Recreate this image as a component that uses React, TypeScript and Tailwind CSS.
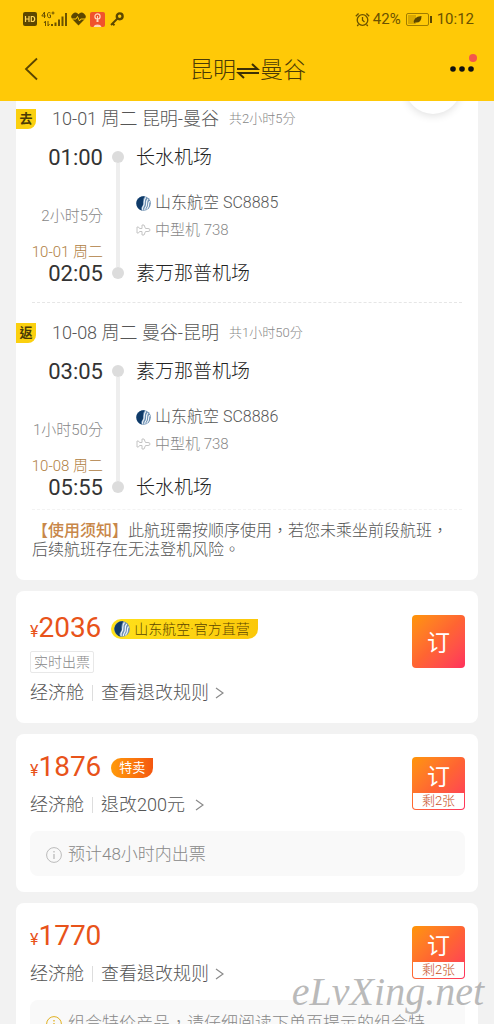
import type { ReactNode } from 'react';

interface Segment {
  mark: string;
  date: string;
  route: string;
  total: string;
  duration: string;
  depart: string;
  departAirport: string;
  arriveDate: string;
  arrive: string;
  arriveAirport: string;
  flight: string;
  plane: string;
}

interface Fare {
  price: number;
  badge?: 'official' | 'sale';
  tag?: string;
  rule: string;
  left?: number;
  note?: string;
  noteTone?: 'gray' | 'gold';
}

const segments: Segment[] = [
  {
    mark: '去',
    date: '10-01 周二',
    route: '昆明-曼谷',
    total: '共2小时5分',
    duration: '2小时5分',
    depart: '01:00',
    departAirport: '长水机场',
    arriveDate: '10-01 周二',
    arrive: '02:05',
    arriveAirport: '素万那普机场',
    flight: '山东航空 SC8885',
    plane: '中型机 738',
  },
  {
    mark: '返',
    date: '10-08 周二',
    route: '曼谷-昆明',
    total: '共1小时50分',
    duration: '1小时50分',
    depart: '03:05',
    departAirport: '素万那普机场',
    arriveDate: '10-08 周二',
    arrive: '05:55',
    arriveAirport: '长水机场',
    flight: '山东航空 SC8886',
    plane: '中型机 738',
  },
];

const fares: Fare[] = [
  { price: 2036, badge: 'official', tag: '实时出票', rule: '查看退改规则' },
  { price: 1876, badge: 'sale', rule: '退改200元\u00a0', left: 2, note: '预计48小时内出票', noteTone: 'gray' },
  {
    price: 1770,
    rule: '查看退改规则',
    left: 2,
    note: '组合特价产品，请仔细阅读下单页提示的组合特',
    noteTone: 'gold',
  },
];

function AirlineLogo({ className }: { className: string }) {
  return (
    <svg viewBox="0 0 16 16" className={className} aria-hidden="true">
      <circle cx="8" cy="8" r="7.800" fill="#6d90b3" />
      <path d="M9.500.3A7.800 7.800 0 1 0 7 15.700C4.800 14 5.200 12.400 6.600 10.800 8.200 9 7.200 7.400 7.500 5.200 7.700 3.200 8.400 1.600 9.500.3z" fill="#0f3a68" />
      <path
        d="M10.500 1.500C7.500 4.500 9.500 7.500 8.400 9.800 7.400 11.800 6.200 12.400 7.200 15M12.800 3C10.200 5.500 12 8.500 10.900 10.800 10.200 12.400 9.200 13 9.400 15M14.600 5.500C12.600 7.500 14 9.500 13 11.500 12.400 12.700 11.600 13 11.600 14.400"
        fill="none"
        stroke="#f2f6fa"
        strokeWidth="1.200"
      />
    </svg>
  );
}

function PlaneIcon() {
  return (
    <svg viewBox="0 0 15 14" className="h-[14px] w-[15px]" fill="none" stroke="#c4c4c4" strokeWidth="1" aria-hidden="true">
      <path d="M1 4h1.500l1 1.500H6V2h2l1.500 3.500H12q2 0 2 1.500t-2 1.500H9.500L8 12H6V8.500H3.500L2.500 10H1z" />
    </svg>
  );
}

function Chevron() {
  return (
    <svg viewBox="0 0 9 12" className="h-3 w-[9px]" fill="none" stroke="#8a8a8a" strokeWidth="1.200" aria-hidden="true">
      <path d="M1 1l7 5-7 5" />
    </svg>
  );
}

function StatusBar() {
  return (
    <div className="flex h-[38px] items-center justify-between pr-5 pl-[23px] text-[15px] font-normal text-[#6b5200]">
      <div className="flex items-center">
        <svg viewBox="0 0 14 14" className="size-[14px]" aria-hidden="true">
          <rect width="14" height="14" rx="2" fill="#5c4700" />
          <path d="M2.500 4v6M6 4v6M2.500 7H6M8.300 4.500v5h1.200q2.200 0 2.200-2.500T9.500 4.500z" fill="none" stroke="#ffd65a" strokeWidth="1.200" />
        </svg>
        <svg viewBox="0 0 27 16" className="ml-1 h-4 w-[27px]" aria-hidden="true">
          <g fill="none" stroke="#6b5200" strokeWidth="1">
            <path d="M3.500 7V1L.8 5h4M9.500 2Q6.500.5 6.500 4t3 2.500V4H8.300M10.500 2h3M12 .5v3" />
            <path d="M4.500 15v-5L3 12M7 10v5l1.500-2" />
          </g>
          <path d="M10 13h2v2h-2zM13.500 11.500h2V15h-2zM17 8.500h2V15h-2zM20.500 5.500h2V15h-2zM24 2h2v13h-2z" fill="#6b5200" />
        </svg>
        <svg viewBox="0 0 15 14" className="ml-[3px] h-[14px] w-[15px]" aria-hidden="true">
          <path d="M7.500 13.500L1.300 7.300A3.800 3.800 0 0 1 7.500 2.200a3.800 3.800 0 0 1 6.200 5.100z" fill="#5c4700" />
          <path d="M1 7h4l1.500-2.500L8.500 9l1.200-2H14" fill="none" stroke="#ffc907" strokeWidth="1" />
        </svg>
        <svg viewBox="0 0 15 15" className="ml-1 size-[15px]" aria-hidden="true">
          <rect width="15" height="15" rx="2" fill="#f0532c" />
          <circle cx="7.500" cy="4.500" r="2.600" fill="none" stroke="#ffd9bd" strokeWidth="1.200" />
          <path d="M7.500 4v6M6 9h3M4 15q0-2 3.500-2t3.500 2z" fill="#ffd9bd" stroke="#ffd9bd" />
        </svg>
        <svg viewBox="0 0 14 14" className="ml-[5px] size-[14px]" fill="none" stroke="#5c4700" aria-hidden="true">
          <circle cx="9.700" cy="4.300" r="2.900" strokeWidth="2.400" />
          <path d="M7.500 6.500L1 13M2.500 11.500l2 1.800" strokeWidth="1.900" />
        </svg>
      </div>
      <div className="flex items-center">
        <svg viewBox="0 0 15 15" className="mr-[3px] size-[15px]" fill="none" stroke="#6b5200" strokeWidth="1.300" aria-hidden="true">
          <circle cx="7.500" cy="8" r="5.300" />
          <path d="M7.500 5v3.300l2 1.700M.8 4.300L3.600 1.500M14.200 4.300l-2.800-2.800M3.500 12.500l-1.300 1.500M11.500 12.500l1.300 1.500" />
        </svg>
        <span>42%</span>
        <svg viewBox="0 0 26 13" className="mx-[5px] h-[13px] w-[26px]" aria-hidden="true">
          <rect x=".5" y=".5" width="22" height="12" rx="1.500" fill="none" stroke="#a07c00" />
          <rect x="2" y="2" width="8" height="9" fill="#d9a800" />
          <path d="M8 10.500Q6.500 4 15.500 3q0 7.500-6.500 6.500z" fill="#5c4700" />
          <rect x="24" y="3" width="2" height="7" fill="#5c4700" />
        </svg>
        <span>10:12</span>
      </div>
    </div>
  );
}

function Header() {
  return (
    <header className="relative z-10 h-[101px] shrink-0 bg-[#ffc907]">
      <StatusBar />
      <div className="flex h-[62px] items-center justify-between pr-[17px] pl-[23px]">
        <button type="button" aria-label="返回" className="w-10">
          <svg viewBox="0 0 16 24" className="h-6 w-4" fill="none" stroke="#5a4500" strokeWidth="1.800">
            <path d="M14 1.500L3 12l11 10.500" />
          </svg>
        </button>
        <h1 className="flex items-center pt-1 text-[23px] leading-8 text-[#4a3a06]">
          昆明
          <svg viewBox="0 0 24 16" className="h-4 w-6" fill="none" stroke="#3d3005" strokeWidth="2" aria-hidden="true">
            <path d="M1 6h20.500L16 1M23 10H2.500L8 15" />
          </svg>
          曼谷
        </h1>
        <button type="button" aria-label="更多" className="flex w-11 justify-end">
          <svg viewBox="0 0 28 30" className="h-[30px] w-7">
            <circle cx="4" cy="15" r="2.800" fill="#111" />
            <circle cx="13" cy="15" r="2.800" fill="#111" />
            <circle cx="22" cy="15" r="2.800" fill="#111" />
            <circle cx="24" cy="4" r="4" fill="#f4564a" />
          </svg>
        </button>
      </div>
    </header>
  );
}

function FlightSegment({ segment }: { segment: Segment }) {
  return (
    <section>
      <div className="flex h-[34px] items-center">
        <span className="flex h-5 w-5 items-center justify-center rounded-br-lg bg-[#fbd00f] text-[13px] font-bold text-[#4a3a06]">
          {segment.mark}
        </span>
        <h2 className="ml-4 text-lg text-[#555]">
          {segment.date} {segment.route}
        </h2>
        <span className="ml-[10px] text-[13px] text-[#888]">{segment.total}</span>
      </div>
      <div className="mt-[9px] flex">
        <div className="flex w-[87px] flex-col text-right text-[15px] leading-[18px]">
          <span className="text-[22px] leading-[26px] font-normal text-[#333]">{segment.depart}</span>
          <span className="mt-9 text-[#888]">{segment.duration}</span>
          <span className="mt-[18px] text-[#b0803f]">{segment.arriveDate}</span>
          <span className="text-[22px] leading-[26px] font-normal text-[#333]">{segment.arrive}</span>
        </div>
        <div className="mx-[9px] flex flex-col items-center pt-[6px] pb-2">
          <i className="size-3 rounded-full bg-[#dcdcdc]" />
          <i className="w-1 flex-1 bg-[#eee]" />
          <i className="size-3 rounded-full bg-[#dcdcdc]" />
        </div>
        <div className="ml-[3px] flex flex-col">
          <span className="text-[19px] leading-[26px] text-[#222]">{segment.departAirport}</span>
          <span className="mt-5 flex items-center gap-1 text-base leading-6 text-[#555]">
            <AirlineLogo className="size-[15px]" />
            {segment.flight}
          </span>
          <span className="mt-[3px] flex items-center gap-1 text-[15px] leading-6 text-[#888]">
            <PlaneIcon />
            {segment.plane}
          </span>
          <span className="mt-[19px] text-[19px] leading-[26px] text-[#222]">{segment.arriveAirport}</span>
        </div>
      </div>
    </section>
  );
}

function FareBadge({ kind }: { kind: 'official' | 'sale' }) {
  if (kind === 'sale') {
    return (
      <span className="ml-[10px] flex h-5 items-center rounded-l-full rounded-br-full bg-linear-to-r from-[#ff9a0a] to-[#f4560f] px-2 text-[13px] font-normal text-white">
        特卖
      </span>
    );
  }
  return (
    <span className="ml-[10px] flex h-5 items-center gap-1 rounded-l-full rounded-br-full bg-linear-to-r from-[#ffe11a] to-[#fbc80a] pr-2 pl-[3px] text-sm text-[#5c4600]">
      <AirlineLogo className="size-4" />
      山东航空·官方直营
    </span>
  );
}

function BookButton({ left }: { left?: number }) {
  return (
    <button
      type="button"
      className="flex h-[53px] w-[53px] shrink-0 flex-col overflow-hidden rounded bg-linear-to-br from-[#ff9500] via-[#ff6432] to-[#ff2f5c] p-px text-white"
    >
      <span className="flex w-full flex-1 items-center justify-center pt-1 text-[23px] leading-6 font-normal">订</span>
      {left && (
        <span className="w-full rounded-b-[3px] bg-white text-[13px] leading-4 text-[#c8501e]">剩{left}张</span>
      )}
    </button>
  );
}

function FareNote({ tone, children }: { tone?: 'gray' | 'gold'; children: ReactNode }) {
  return (
    <div className="mt-[14px] flex h-[45px] items-center gap-[6px] overflow-hidden rounded-lg bg-[#f9f9f9] px-4 pt-[2px] text-[17px] whitespace-nowrap text-[#888]">
      <svg
        viewBox="0 0 16 16"
        className={tone === 'gold' ? 'size-4 shrink-0 text-[#e0b020]' : 'size-4 shrink-0 text-[#bbb]'}
        fill="none"
        stroke="currentColor"
        aria-hidden="true"
      >
        <circle cx="8" cy="8" r="7.400" />
        <path d="M8 4v1.500M8 7v5" strokeWidth="1.300" />
      </svg>
      {children}
    </div>
  );
}

function FareCard({ fare }: { fare: Fare }) {
  return (
    <article className={fare.note ? 'rounded-lg bg-white pt-5 pr-[13px] pb-4 pl-[14px]' : 'rounded-lg bg-white pt-6 pr-[13px] pb-[18px] pl-[14px]'}>
      <div className="flex justify-between">
        <div>
          <div className="flex h-7 items-center text-[#e8531a]">
            <span className="flex items-baseline leading-7 font-normal">
              <span className="text-base">¥</span>
              <span className="text-[28px]">{fare.price}</span>
            </span>
            {fare.badge && <FareBadge kind={fare.badge} />}
          </div>
          {fare.tag && (
            <span className="mt-2 block h-[22px] w-fit rounded-xs border border-[#e8e8e8] px-[3px] text-sm leading-5 text-[#888]">
              {fare.tag}
            </span>
          )}
          <div className={fare.tag ? 'mt-2 flex items-center text-lg leading-6 text-[#555]' : 'mt-[11px] flex items-center text-lg leading-6 text-[#555]'}>
            经济舱
            <i className="mx-2 h-4 w-px bg-[#ddd]" />
            <button type="button" className="flex items-center gap-[6px]">
              {fare.rule}
              <Chevron />
            </button>
          </div>
        </div>
        <div className={fare.note ? 'pt-[3px]' : ''}>
          <BookButton left={fare.left} />
        </div>
      </div>
      {fare.note && <FareNote tone={fare.noteTone}>{fare.note}</FareNote>}
    </article>
  );
}

export default function App() {
  return (
    <div className="relative flex h-screen flex-col overflow-hidden bg-[#f2f2f2] font-[Roboto,'Noto_Sans_CJK_TC',sans-serif] font-light">
      <Header />
      <button
        type="button"
        aria-label="分享"
        className="absolute top-[58px] right-[33px] size-14 rounded-full bg-white shadow-[0_2px_8px_rgba(0,0,0,0.12)]"
      />
      <main className="flex flex-col gap-[11px] px-4">
        <div className="rounded-b-lg bg-white pt-px pb-[21px]">
          <FlightSegment segment={segments[0]} />
          <hr className="mx-4 mt-[15px] mb-[13px] border-dashed border-[#e6e6e6]" />
          <FlightSegment segment={segments[1]} />
          <hr className="mx-4 mt-2 mb-[11px] border-dashed border-[#f3f3f3]" />
          <p className="px-4 text-base leading-[19px] text-[#555]">
            <b className="font-medium text-[#c8874a]">【使用须知】</b>
            此航班需按顺序使用，若您未乘坐前段航班，后续航班存在无法登机风险。
          </p>
        </div>
        {fares.map((fare) => (
          <FareCard key={fare.price} fare={fare} />
        ))}
      </main>
      <span className="pointer-events-none absolute right-[10px] bottom-3 font-['Liberation_Serif'] text-[40px] leading-10 text-[#8c8c8c]/60 italic">
        eLvXing.net
      </span>
    </div>
  );
}
